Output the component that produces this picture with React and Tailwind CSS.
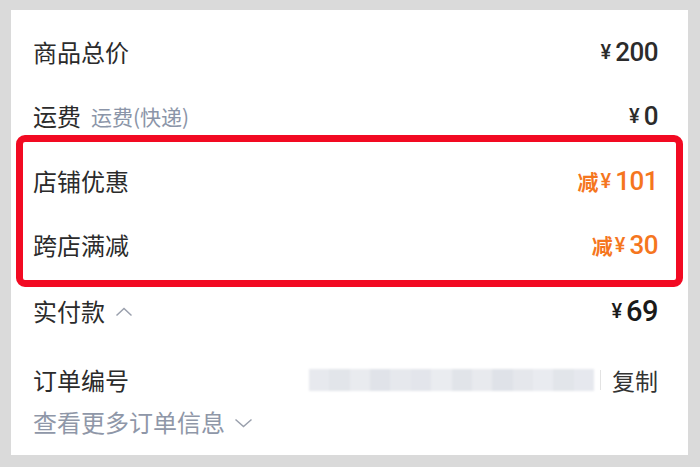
import React from "react";

const cjk = "font-['Noto_Sans_CJK_SC','Noto_Sans',sans-serif]";
const num = "font-['Roboto','Noto_Sans_CJK_SC',sans-serif]";

function Price({ value, className = "", digits = "text-[26px]" }) {
  return (
    <span className={`flex items-center ${className}`}>
      <span className={`${num} text-[20px] font-medium mr-[4px] leading-none`}>¥</span>
      <span className={`${num} ${digits} font-medium leading-none tracking-[-0.5px]`}>{value}</span>
    </span>
  );
}

function Row({ children, right, h = "h-[64px]" }) {
  return (
    <div className={`flex items-center justify-between ${h}`}>
      <div className="flex items-center">{children}</div>
      {right}
    </div>
  );
}

const blocks = [
  "#e7e9ee", "#e2e5ea", "#e9ebef", "#e0e3e9", "#e6e8ed", "#e3e5eb", "#eaecf0", "#e1e4e9",
  "#e8eaee", "#dfe2e8", "#e5e7ec", "#e9ebf0", "#e2e5ea", "#e6e8ee",
];

export default function App() {
  return (
    <div className={`w-[700px] h-[467px] bg-[#dadada] pt-[10px] pl-[11px] ${cjk}`}>
      <div className="w-[677px] h-[445px] bg-white pl-[22px] pr-[30px] pt-[10px] flex flex-col text-[#2b2b2b]">
        <Row right={<Price value="200" />}>
          <span className="text-[24px] leading-none">商品总价</span>
        </Row>
        <Row right={<Price value="0" />}>
          <span className="text-[24px] leading-none">运费</span>
          <span className="text-[21px] leading-none text-[#8b95a8] ml-[10px]">运费(快递)</span>
        </Row>
        <div className="mt-[-13px] ml-[-17px] mr-[-25px] border-[7px] border-[#f20a22] rounded-[9px] pl-[10px] pr-[18px] pt-[7px] pb-[3px]">
          <Row
            right={
              <span className="flex items-center text-[#f5761e]">
                <span className="text-[21px] font-bold leading-none mr-[2px]">减</span>
                <Price value="101" />
              </span>
            }
          >
            <span className="text-[24px] leading-none">店铺优惠</span>
          </Row>
          <Row
            right={
              <span className="flex items-center text-[#f5761e]">
                <span className="text-[21px] font-bold leading-none mr-[2px]">减</span>
                <Price value="30" />
              </span>
            }
          >
            <span className="text-[24px] leading-none">跨店满减</span>
          </Row>
        </div>
        <Row h="h-[48px]" right={<Price value="69" digits="text-[29px]" className="text-[#1a1a1a]" />}>
          <span className="text-[24px] leading-none">实付款</span>
          <svg width="18" height="10" viewBox="0 0 18 10" className="ml-[10px] mt-[2px]">
            <polyline points="1.5,8.5 9,1.5 16.5,8.5" fill="none" stroke="#9aa0ad" strokeWidth="1.5" />
          </svg>
        </Row>
        <div className="mt-[25px] h-[40px] flex items-center justify-between">
          <span className="text-[24px] leading-none">订单编号</span>
          <div className="flex items-center">
            <div className="flex h-[22px] w-[285px] blur-[1px]">
              {blocks.map((c, i) => (
                <div key={i} className="flex-1 h-full" style={{ backgroundColor: c }} />
              ))}
            </div>
            <div className="w-px h-[20px] bg-[#e3e3e3] ml-[6px] mr-[11px]" />
            <span className="text-[23px] leading-none text-[#333]">复制</span>
          </div>
        </div>
        <div className="mt-[2px] h-[40px] flex items-center">
          <span className="text-[24px] leading-none text-[#8f97a8]">查看更多订单信息</span>
          <svg width="19" height="10" viewBox="0 0 19 10" className="ml-[9px] mt-[2px]">
            <polyline points="1.5,1.5 9.5,8.5 17.5,1.5" fill="none" stroke="#9aa0ad" strokeWidth="1.5" />
          </svg>
        </div>
      </div>
    </div>
  );
}
